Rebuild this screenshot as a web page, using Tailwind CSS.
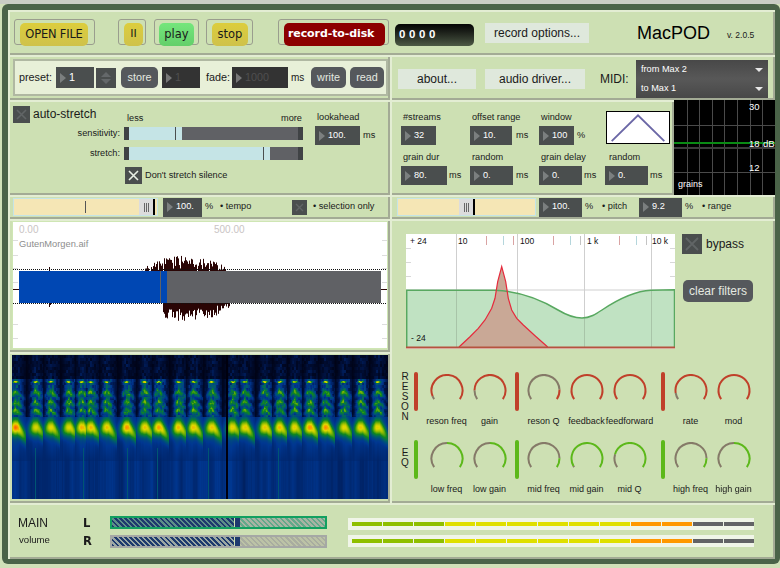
<!DOCTYPE html>
<html>
<head>
<meta charset="utf-8">
<title>MacPOD</title>
<script src="https://cdn.jsdelivr.net/npm/@tailwindcss/browser@4"></script>
</head>
<body class="w-[780px] h-[568px] overflow-hidden bg-[#d0e0b8] font-['Liberation_Sans',sans-serif] text-[9.2px] text-[#1a1a1a]">
<div class="h-[4px] bg-[#c9cdc4]"></div>
<div class="w-[778px] h-[560px] ml-[2px] pl-[6px] pt-[6px] bg-[#4a6348] rounded-[6px]">
<div class="w-[767px] flex flex-col bg-[#cde0b3]">

  <!-- transport -->
  <div class="h-[45px] flex items-start pl-[6px] shadow-[inset_2px_2px_0_#e3edd3,inset_-2px_-2px_0_#a3ab95] font-['DejaVu_Sans',sans-serif]">
    <div class="mt-[9px] w-[81px] h-[26px] pl-[5px] pt-[3px] rounded-[3px] border border-[#9a9d8e] shrink-0">
      <div class="w-[68px] h-[23px] rounded-[5px] bg-gradient-to-b from-[#dccd3c] to-[#cfc24a] flex items-center justify-center text-[11.5px] tracking-[-0.2px]">OPEN FILE</div>
    </div>
    <div class="mt-[9px] ml-[23px] w-[28px] h-[26px] pl-[5px] pt-[3px] rounded-[3px] border border-[#9a9d8e] shrink-0">
      <div class="w-[19px] h-[23px] rounded-[5px] bg-gradient-to-b from-[#dccd3c] to-[#cfc24a] flex items-center justify-center text-[11px]">II</div>
    </div>
    <div class="mt-[9px] ml-[8px] w-[45px] h-[26px] pl-[4px] pt-[3px] rounded-[3px] border border-[#9a9d8e] shrink-0">
      <div class="w-[35px] h-[23px] rounded-[5px] bg-gradient-to-b from-[#74e67c] to-[#63cf6a] flex items-center justify-center text-[11.5px]">play</div>
    </div>
    <div class="mt-[9px] ml-[7px] w-[47px] h-[26px] pl-[5px] pt-[3px] rounded-[3px] border border-[#9a9d8e] shrink-0">
      <div class="w-[36px] h-[23px] rounded-[5px] bg-gradient-to-b from-[#dccd3c] to-[#cfc24a] flex items-center justify-center text-[11.5px]">stop</div>
    </div>
    <div class="mt-[9px] ml-[25px] w-[111px] h-[26px] pl-[5px] pt-[3px] rounded-[3px] border border-[#9a9d8e] shrink-0">
      <div class="w-[101px] h-[23px] rounded-[5px] bg-[#8c0000] text-white font-bold flex items-center pl-[4px] whitespace-nowrap text-[11px] tracking-[-0.1px]">record-to-disk</div>
    </div>
    <div class="mt-[14px] ml-[6px] w-[79px] h-[22px] rounded-[5px] bg-gradient-to-b from-[#050505] to-[#4d5a45] text-white font-['Liberation_Sans',sans-serif] font-bold text-[11.5px] tracking-[3.6px] pl-[4px] flex items-center shrink-0">0000</div>
    <div class="mt-[13px] ml-[11px] w-[104px] h-[20px] bg-[#dfe8dc] flex items-center justify-center font-['Liberation_Sans',sans-serif] text-[12px] shrink-0">record options...</div>
    <div class="mt-[12px] ml-[48px] w-[73px] text-[18px] leading-[22px] text-black font-['Liberation_Sans',sans-serif] whitespace-nowrap shrink-0">MacPOD</div>
    <div class="mt-[20px] ml-[17px] text-[8.5px] leading-[11px] font-['Liberation_Sans',sans-serif] whitespace-nowrap">v. 2.0.5</div>
  </div>

  <!-- presets / midi -->
  <div class="h-[45px] flex">
    <div class="w-[382px] h-full pl-[5px] pt-[4px] shadow-[inset_2px_2px_0_#e3edd3,inset_-2px_-2px_0_#a3ab95]">
      <div class="w-[375px] h-[37px] flex items-center pl-[4px] bg-[#e8f0d8] border-2 border-[#b0b8a2] text-[10.8px]">
        <span class="w-[37px]">preset:</span>
        <div class="w-[38px] h-[21px] bg-[#4a4e4e] flex items-center pl-[4px] gap-[3px] text-white"><i class="w-0 h-0 border-y-[5px] border-y-transparent border-l-[6px] border-l-[#7b7f7f]"></i>1</div>
        <div class="ml-[2px] w-[20px] h-[20px] bg-[#4a4e4e] flex flex-col items-center justify-center gap-[2px]"><i class="w-0 h-0 border-x-[5px] border-x-transparent border-b-[5px] border-b-[#64686a]"></i><i class="w-0 h-0 border-x-[5px] border-x-transparent border-t-[5px] border-t-[#64686a]"></i></div>
        <div class="ml-[5px] w-[37px] h-[21px] rounded-[5px] bg-[#55585c] text-[#e4e8e0] flex items-center justify-center">store</div>
        <div class="ml-[4px] w-[38px] h-[21px] bg-[#333333] flex items-center pl-[4px] gap-[3px] text-[#4f4f4f]"><i class="w-0 h-0 border-y-[5px] border-y-transparent border-l-[6px] border-l-[#777777]"></i>1</div>
        <span class="ml-[6px] w-[26px]">fade:</span>
        <div class="w-[56px] h-[21px] bg-[#333333] flex items-center pl-[4px] gap-[3px] text-[#4f4f4f]"><i class="w-0 h-0 border-y-[5px] border-y-transparent border-l-[6px] border-l-[#777777]"></i>1000</div>
        <span class="ml-[3px] w-[20px] text-[10px]">ms</span>
        <div class="w-[35px] h-[21px] rounded-[5px] bg-[#55585c] text-[#e4e8e0] flex items-center justify-center">write</div>
        <div class="ml-[4px] w-[34px] h-[21px] rounded-[5px] bg-[#55585c] text-[#e4e8e0] flex items-center justify-center">read</div>
      </div>
    </div>
    <div class="w-[385px] h-full flex items-start pl-[8px] shadow-[inset_2px_2px_0_#e3edd3,inset_-2px_-2px_0_#a3ab95]">
      <div class="mt-[14px] w-[78px] h-[20px] bg-[#dfe8dc] flex items-center justify-center text-[12px]">about...</div>
      <div class="mt-[14px] ml-[9px] w-[100px] h-[20px] bg-[#dfe8dc] flex items-center justify-center text-[12px]">audio driver...</div>
      <div class="mt-[16px] ml-[15px] w-[36px] text-[12px] leading-[16px]">MIDI:</div>
      <div class="mt-[5px] w-[132px] h-[38px] text-white text-[9.2px]">
        <div class="h-[19px] flex items-center justify-between px-[5px] bg-gradient-to-b from-[#484848] to-[#585858]">from Max 2<i class="w-0 h-0 border-x-[4px] border-x-transparent border-t-[4px] border-t-[#e8e8e8]"></i></div>
        <div class="h-[19px] flex items-center justify-between px-[5px] bg-gradient-to-b from-[#585858] to-[#484848]">to Max 1<i class="w-0 h-0 border-x-[4px] border-x-transparent border-t-[4px] border-t-[#e8e8e8]"></i></div>
      </div>
    </div>
  </div>

  <!-- auto-stretch / grains -->
  <div class="h-[95px] flex">
    <div class="w-[382px] h-full flex shadow-[inset_2px_2px_0_#e3edd3,inset_-2px_-2px_0_#a3ab95]">
      <div class="w-[307px] pl-[5px] pt-[6px]">
        <div class="h-[21px] flex items-start">
          <div class="w-[17px] h-[17px] bg-[#4a4e4e] flex items-center justify-center"><svg width="13" height="13" viewBox="0 0 13 13"><path d="M2 2L11 11M11 2L2 11" stroke="#616566" stroke-width="1.6"/></svg></div>
          <span class="ml-[3px] text-[12px] leading-[16px] w-[94px] whitespace-nowrap">auto-stretch</span>
          <span class="mt-[6px] w-[154px]">less</span>
          <span class="mt-[6px]">more</span>
        </div>
        <div class="flex items-center h-[13px]">
          <span class="w-[107px] text-right">sensitivity:</span>
          <div class="ml-[4px] w-[179px] h-[13px] flex bg-[#606165] shrink-0">
            <div class="w-[5px] bg-[#404345]"></div>
            <div class="w-[53px] bg-[#c5e4e6] relative"><div class="absolute left-[46px] top-0 w-[1px] h-full bg-[#4a4e4e]"></div></div>
            <div class="flex-1"></div>
            <div class="w-[5px] bg-[#404345]"></div>
          </div>
        </div>
        <div class="flex items-center h-[13px] mt-[7px]">
          <span class="w-[107px] text-right">stretch:</span>
          <div class="ml-[4px] w-[179px] h-[13px] flex bg-[#606165] shrink-0">
            <div class="w-[5px] bg-[#404345]"></div>
            <div class="w-[141px] bg-[#c5e4e6] relative"><div class="absolute left-[134px] top-0 w-[1px] h-full bg-[#4a4e4e]"></div></div>
            <div class="flex-1"></div>
            <div class="w-[5px] bg-[#404345]"></div>
          </div>
        </div>
        <div class="flex items-center mt-[7px] ml-[112px]">
          <div class="w-[17px] h-[17px] bg-[#4a4e4e] flex items-center justify-center"><svg width="13" height="13" viewBox="0 0 13 13"><path d="M2 2L11 11M11 2L2 11" stroke="#e8eee4" stroke-width="1.6"/></svg></div>
          <span class="ml-[3px] whitespace-nowrap">Don't stretch silence</span>
        </div>
      </div>
      <div class="pt-[11px]">
        <div class="h-[15px] ml-[2px]">lookahead</div>
        <div class="flex items-center">
          <div class="w-[45px] h-[19px] bg-[#4a4e4e] flex items-center pl-[4px] gap-[3px] text-white"><i class="w-0 h-0 border-y-[5px] border-y-transparent border-l-[6px] border-l-[#7b7f7f]"></i>100.</div>
          <span class="ml-[3px]">ms</span>
        </div>
      </div>
    </div>
    <div class="w-[284px] h-full pl-[11px] pt-[11px] grid grid-cols-[69px_69px_66px_1fr] gap-y-[6px] content-start shadow-[inset_2px_2px_0_#e3edd3,inset_-2px_-2px_0_#a3ab95]">
      <div>
        <div class="h-[15px] ml-[2px]">#streams</div>
        <div class="w-[35px] h-[19px] bg-[#4a4e4e] flex items-center pl-[4px] gap-[3px] text-white"><i class="w-0 h-0 border-y-[5px] border-y-transparent border-l-[6px] border-l-[#7b7f7f]"></i>32</div>
      </div>
      <div>
        <div class="h-[15px] ml-[2px]">offset range</div>
        <div class="flex items-center"><div class="w-[42px] h-[19px] bg-[#4a4e4e] flex items-center pl-[4px] gap-[3px] text-white"><i class="w-0 h-0 border-y-[5px] border-y-transparent border-l-[6px] border-l-[#7b7f7f]"></i>10.</div><span class="ml-[4px]">ms</span></div>
      </div>
      <div>
        <div class="h-[15px] ml-[2px]">window</div>
        <div class="flex items-center"><div class="w-[35px] h-[19px] bg-[#4a4e4e] flex items-center pl-[4px] gap-[3px] text-white"><i class="w-0 h-0 border-y-[5px] border-y-transparent border-l-[6px] border-l-[#7b7f7f]"></i>100</div><span class="ml-[3px]">%</span></div>
      </div>
      <div class="ml-[1px]">
        <svg width="64" height="33" viewBox="0 0 64 33" class="bg-white border border-black block"><path d="M4 31L32 3.5L60 31" fill="none" stroke="#6b67a6" stroke-width="2"/></svg>
      </div>
      <div>
        <div class="h-[15px] ml-[2px]">grain dur</div>
        <div class="flex items-center"><div class="w-[46px] h-[19px] bg-[#4a4e4e] flex items-center pl-[4px] gap-[3px] text-white"><i class="w-0 h-0 border-y-[5px] border-y-transparent border-l-[6px] border-l-[#7b7f7f]"></i>80.</div><span class="ml-[2px]">ms</span></div>
      </div>
      <div>
        <div class="h-[15px] ml-[2px]">random</div>
        <div class="flex items-center"><div class="w-[43px] h-[19px] bg-[#4a4e4e] flex items-center pl-[4px] gap-[3px] text-white"><i class="w-0 h-0 border-y-[5px] border-y-transparent border-l-[6px] border-l-[#7b7f7f]"></i>0.</div><span class="ml-[3px]">ms</span></div>
      </div>
      <div>
        <div class="h-[15px] ml-[2px]">grain delay</div>
        <div class="flex items-center"><div class="w-[43px] h-[19px] bg-[#4a4e4e] flex items-center pl-[4px] gap-[3px] text-white"><i class="w-0 h-0 border-y-[5px] border-y-transparent border-l-[6px] border-l-[#7b7f7f]"></i>0.</div><span class="ml-[2px]">ms</span></div>
      </div>
      <div>
        <div class="h-[15px] ml-[4px]">random</div>
        <div class="flex items-center"><div class="w-[43px] h-[19px] bg-[#4a4e4e] flex items-center pl-[4px] gap-[3px] text-white"><i class="w-0 h-0 border-y-[5px] border-y-transparent border-l-[6px] border-l-[#7b7f7f]"></i>0.</div><span class="ml-[2px]">ms</span></div>
      </div>
    </div>
    <svg width="101" height="95" viewBox="0 0 101 95" class="bg-black block shrink-0">
      <g stroke="#4a4a4a" stroke-width="1">
        <path d="M13.5 0V95M25.5 0V95M38.5 0V95M50.5 0V95M63.5 0V95M76.5 0V95M88.5 0V95"/>
        <path d="M0 25.5H101M0 72.5H101"/>
      </g>
      <path d="M0 48H101" stroke="#3c3c3c" stroke-width="2"/>
      <path d="M0 43H101" stroke="#0a8a14" stroke-width="2"/>
      <g fill="#ffffff" font-size="9.5" font-family="Liberation Sans">
        <text x="75" y="10">30</text>
        <text x="75" y="47">18</text>
        <text x="89" y="47">dB</text>
        <text x="75" y="71">12</text>
        <text x="4" y="87" font-size="9">grains</text>
      </g>
    </svg>
  </div>

  <!-- tempo / pitch -->
  <div class="h-[24px] flex">
    <div class="w-[382px] h-full flex items-center pl-[5px] shadow-[inset_2px_2px_0_#e3edd3,inset_-2px_-2px_0_#a3ab95]">
      <div class="w-[145px] h-[18px] bg-[#f5e6b5] border border-[#c5e4e6] relative shrink-0">
        <div class="absolute left-[71px] top-[2px] w-[1px] h-[12px] bg-[#555555]"></div>
        <div class="absolute left-[125px] top-0 w-[16px] h-[16px] bg-[#dcdcdc] border-r-2 border-black flex items-center justify-center gap-[1px]"><i class="w-[1px] h-[9px] bg-[#666666]"></i><i class="w-[1px] h-[9px] bg-[#666666]"></i><i class="w-[1px] h-[9px] bg-[#666666]"></i></div>
      </div>
      <div class="ml-[5px] w-[39px] h-[19px] bg-[#4a4e4e] flex items-center pl-[4px] gap-[3px] text-white shrink-0"><i class="w-0 h-0 border-y-[5px] border-y-transparent border-l-[6px] border-l-[#7b7f7f]"></i>100.</div>
      <span class="ml-[3px] w-[15px]">%</span>
      <span class="whitespace-nowrap w-[72px]">• tempo</span>
      <div class="w-[15px] h-[15px] bg-[#4a4e4e] flex items-center justify-center shrink-0"><svg width="11" height="11" viewBox="0 0 11 11"><path d="M2 2L9 9M9 2L2 9" stroke="#616566" stroke-width="1.4"/></svg></div>
      <span class="ml-[6px] whitespace-nowrap">• selection only</span>
    </div>
    <div class="w-[385px] h-full flex items-center pl-[7px] shadow-[inset_2px_2px_0_#e3edd3,inset_-2px_-2px_0_#a3ab95]">
      <div class="w-[139px] h-[18px] bg-[#f5e6b5] border border-[#c5e4e6] relative shrink-0">
        <div class="absolute left-[61px] top-0 w-[16px] h-[16px] bg-[#dcdcdc] border-r-2 border-black flex items-center justify-center gap-[1px]"><i class="w-[1px] h-[9px] bg-[#666666]"></i><i class="w-[1px] h-[9px] bg-[#666666]"></i><i class="w-[1px] h-[9px] bg-[#666666]"></i></div>
      </div>
      <div class="ml-[3px] w-[43px] h-[19px] bg-[#4a4e4e] flex items-center pl-[4px] gap-[3px] text-white shrink-0"><i class="w-0 h-0 border-y-[5px] border-y-transparent border-l-[6px] border-l-[#7b7f7f]"></i>100.</div>
      <span class="ml-[3px] w-[17px]">%</span>
      <span class="whitespace-nowrap w-[37px]">• pitch</span>
      <div class="w-[43px] h-[19px] bg-[#4a4e4e] flex items-center pl-[4px] gap-[3px] text-white shrink-0"><i class="w-0 h-0 border-y-[5px] border-y-transparent border-l-[6px] border-l-[#7b7f7f]"></i>9.2</div>
      <span class="ml-[3px] w-[17px]">%</span>
      <span class="whitespace-nowrap">• range</span>
    </div>
  </div>

  <!-- waveform, sonogram, filters -->
  <div class="h-[284px] flex">
    <div class="w-[382px] flex flex-col">
      <div class="h-[133px] pl-[5px] pt-[3px] shadow-[inset_2px_2px_0_#e3edd3,inset_-2px_-2px_0_#a3ab95]">
        <svg id="wave" width="374" height="126" viewBox="0 0 374 126" class="bg-white block outline outline-[#cfe6b4]">
          <g id="wavebars" stroke="#2a0505" stroke-width="1"></g>
          <g stroke="#dddddd" stroke-width="1" id="wavetick"></g>
          <path d="M0 67.5H6M368 67.5H374" stroke="#2a0505"/>
          <path d="M0 47.5H374M0 81.5H374" stroke="#111111" stroke-width="1" stroke-dasharray="1 1"/>
          <rect x="6" y="49" width="148" height="32" fill="#0047b3"/>
          <rect x="154" y="49" width="214" height="32" fill="#606165"/>
          <rect x="147" y="49" width="1" height="32" fill="#606165"/>
          <g font-size="10" font-family="Liberation Sans">
            <text x="6" y="11" fill="#c9c4c4">0.00</text>
            <text x="201" y="11" fill="#c9c4c4">500.00</text>
            <text x="6" y="25" fill="#8d8d8d" font-size="9.3">GutenMorgen.aif</text>
          </g>
        </svg>
      </div>
      <div class="h-[151px] pl-[4px] pt-[3px] shadow-[inset_2px_2px_0_#e3edd3,inset_-2px_-2px_0_#a3ab95]">
        <canvas id="sono" width="376" height="144" class="block"></canvas>
      </div>
    </div>
    <div class="w-[385px] flex flex-col pt-[15px] shadow-[inset_2px_2px_0_#e3edd3,inset_-2px_-2px_0_#a3ab95]">
      <div class="flex pl-[16px] items-start">
        <svg width="269" height="115" viewBox="406 234 269 115" class="bg-white block shrink-0">
          <path d="M406 290H675M456.5 234V348M517.5 234V348M584.5 234V348M651.5 234V348" stroke="#cfcfcf" fill="none"/>
          <path d="M406 248.5H411M406 262.5H411M406 276.5H411M406 318.5H411M406 332.5H411M670 248.5H675M670 262.5H675M670 276.5H675M670 318.5H675M670 332.5H675" stroke="#d8d8d8"/>
          <path d="M406 290.3H495C515 291 535 296 558 310C568 316 575 318 582 318C590 318 596 314 602 310C620 298 635 291 651 290.3L675 289.7V347H406Z" fill="#c0e2c2" stroke="none"/>
          <path d="M456.5 290V347M517.5 292V347M584.5 318V347M651.5 290V347" stroke="#a8c4a8"/>
          <path d="M459 347L470 336.7L478.3 328.3L485 320L491.7 308.3L495 298.3L497.7 281.7L501.7 266.7L505.7 281.7L508.3 298.3L511.7 310L516.7 318.3L523.3 325L535 335.7L547.7 347Z" fill="#c9a896" stroke="none"/>
          <path d="M406.7 347V290.3H495C515 291 535 296 558 310C568 316 575 318 582 318C590 318 596 314 602 310C620 298 635 291 651 290.3L674.5 289.7V347" fill="none" stroke="#58a860" stroke-width="1.5"/>
          <path d="M459 347L470 336.7L478.3 328.3L485 320L491.7 308.3L495 298.3L497.7 281.7L501.7 266.7L505.7 281.7L508.3 298.3L511.7 310L516.7 318.3L523.3 325L535 335.7L547.7 347" fill="none" stroke="#e52a3c" stroke-width="1.2"/>
          <path d="M406 347.5H675" stroke="#b5533f" stroke-width="2"/>
          <path d="M486.5 236V245M513.5 236V245M553.5 236V245M619.5 236V245" stroke="#d9a3a3"/>
          <path d="M503.5 236V245M570.5 236V245M636.5 236V245" stroke="#b5d6dc"/>
          <path d="M580.5 236V245M646.5 236V245" stroke="#c4c4c4"/>
          <g fill="#111111" font-size="8.5" font-family="Liberation Sans">
            <text x="410" y="244">+ 24</text>
            <text x="458" y="244">10</text>
            <text x="520" y="244">100</text>
            <text x="587" y="244">1 k</text>
            <text x="652" y="244">10 k</text>
            <text x="411" y="341">- 24</text>
          </g>
        </svg>
        <div class="ml-[7px]">
          <div class="flex items-center">
            <div class="w-[20px] h-[20px] bg-[#4a4e4e] flex items-center justify-center"><svg width="16" height="16" viewBox="0 0 16 16"><path d="M2 2L14 14M14 2L2 14" stroke="#616566" stroke-width="1.8"/></svg></div>
            <span class="ml-[4px] text-[12px]">bypass</span>
          </div>
          <div class="mt-[26px] ml-[1px] w-[70px] h-[22px] rounded-[5px] bg-[#55585c] text-[#e4e8e0] text-[12px] whitespace-nowrap flex items-center justify-center">clear filters</div>
        </div>
      </div>
      <div id="knobs" class="mt-[23px] pl-[10px]"></div>
    </div>
  </div>

  <!-- main volume -->
  <div class="h-[56px] flex pl-[10px] pt-[13px] shadow-[inset_2px_2px_0_#e3edd3,inset_-2px_-2px_0_#a3ab95]">
    <div class="w-[65px]">
      <div class="h-[17px] text-[12px] leading-[14px]">MAIN</div>
      <div class="ml-[1px] text-[9.6px]">volume</div>
    </div>
    <div class="w-[27px] font-bold text-[11.5px] font-['DejaVu_Sans',sans-serif]">
      <div class="h-[18px] leading-[14px]">L</div>
      <div class="leading-[14px]">R</div>
    </div>
    <div class="w-[238px]">
      <div class="w-[217px] h-[13px] border-2 border-[#12a060] flex">
        <div class="w-[122px] h-full bg-[repeating-linear-gradient(45deg,#1e3a6e_0,#1e3a6e_2px,#5d8f88_2px,#5d8f88_3.6px)]"></div>
        <div class="ml-[1px] w-[5px] h-full bg-[#1e3a6e]"></div>
        <div class="flex-1 h-full bg-[repeating-linear-gradient(45deg,#a9b3a3_0,#a9b3a3_2px,#62a98a_2px,#62a98a_3.6px)]"></div>
      </div>
      <div class="mt-[6px] w-[217px] h-[13px] border-2 border-[#a5a8a5] flex">
        <div class="w-[122px] h-full bg-[repeating-linear-gradient(45deg,#1e3a6e_0,#1e3a6e_2px,#9ba8a4_2px,#9ba8a4_3.6px)]"></div>
        <div class="ml-[1px] w-[5px] h-full bg-[#1e3a6e]"></div>
        <div class="flex-1 h-full bg-[repeating-linear-gradient(45deg,#bcc3a6_0,#bcc3a6_2px,#a9ada0_2px,#a9ada0_3.6px)]"></div>
      </div>
    </div>
    <div class="pt-[2px]">
      <div id="meterL" class="w-[406px] h-[12px] bg-[#f0f5e8] pl-[4px] flex items-center gap-[1px]"></div>
      <div id="meterR" class="mt-[5px] w-[406px] h-[12px] bg-[#f0f5e8] pl-[4px] flex items-center gap-[1px]"></div>
    </div>
  </div>

</div>
</div>
<script>
// tiny seeded random so the picture is stable between runs
let seed = 12345;
function rnd() { seed = (seed * 1664525 + 1013904223) >>> 0; return seed / 4294967296; }

// waveform bars
function drawWave() {
  let out = '';
  for (let x = 127; x < 219; x += 1) {
    const t = (x - 127) / 92;
    const env = Math.pow(Math.sin(Math.PI * Math.min(1, t * 0.97 + 0.03)), 0.25);
    const top = env * (rnd() * 10 + 24) * (rnd() < 0.25 ? 0.75 : 1);
    const bot = env * (rnd() * 12 + 20) * (t < 0.25 ? 0.5 : 1);
    out += `<path d="M${x + 0.5} ${67 - top}V${67 + bot}"/>`;
  }
  out += '<path d="M36.5 45V85M37.5 50V83"/>';
  document.getElementById('wavebars').innerHTML = out;
  document.getElementById('wavetick').innerHTML = [18, 33, 46, 60, 102, 116, 130].map(y =>
    `<path d="M0 ${y}.5H5M369 ${y}.5H374"/>`).join('');
}
drawWave();

// sonogram, a made-up speech-like picture
const stops = [[0,0,0,14],[.18,0,20,70],[.33,0,55,145],[.45,0,95,105],[.58,15,135,30],[.75,150,190,0],[.85,225,215,0],[.93,255,150,0],[1,250,70,10]];
function colour(v) {
  v = Math.max(0, Math.min(1, v));
  for (let i = 1; i < stops.length; i++) {
    if (v <= stops[i][0]) {
      const a = stops[i - 1], b = stops[i], t = (v - a[0]) / (b[0] - a[0]);
      return [a[1] + (b[1] - a[1]) * t, a[2] + (b[2] - a[2]) * t, a[3] + (b[3] - a[3]) * t];
    }
  }
  return stops[stops.length - 1].slice(1);
}
function drawSono() {
  const c = document.getElementById('sono'), g = c.getContext('2d');
  const W = c.width, H = c.height, img = g.createImageData(W, H);
  const bursts = [3, 23, 38, 56, 69, 78, 94, 114, 132, 146, 166, 181, 199, 220, 232, 252, 267, 282, 297, 313, 331, 348, 365];
  const streaks = [23, 71, 115, 145, 196, 266];
  const amp = bursts.map(() => 0.85 + rnd() * 0.2);
  // coarse noise cells, the reference is made of small blocks
  const cells = [];
  for (let i = 0; i < 200 * 60; i++) cells.push(rnd());
  // column brightness, low-passed so the lower part reads as soft stripes
  const raw = [];
  for (let x = 0; x < W; x++) raw.push(rnd());
  const col = raw.map((_, x) => {
    let s = 0;
    for (let k = -2; k <= 2; k++) s += raw[Math.max(0, Math.min(W - 1, x + k))];
    return s / 5;
  });
  for (let y = 0; y < H; y++) {
    for (let x = 0; x < W; x++) {
      let bi = 0, dx = 99;
      bursts.forEach((b, i) => {
        const d = x - b;
        if (Math.abs(d) < Math.abs(dx)) { dx = d; bi = i; }
      });
      const env = Math.exp(-dx * dx / (dx < 0 ? 30 : 80));
      const n = cells[Math.floor(x / 2) + 200 * Math.floor(y / 3)];
      let v;
      if (y < 24) {
        v = 0.02 + env * (0.05 + n * 0.15);
      } else if (y < 62) {
        v = 0.04 + env * (0.24 + n * 0.22);
        for (const yc of [36, 46, 54]) {
          const cy = yc + Math.abs(dx) * 0.8;
          v += env * 0.24 * Math.exp(-(y - cy) * (y - cy) / 8);
        }
        if (y >= 26 && y <= 27) v += env * Math.exp(-dx * dx / 8) * 0.4;
      } else if (y < 106) {
        const cy = 72 + Math.pow(Math.max(0, dx - 2), 1.15) * 0.9 + Math.max(0, -dx - 2) * 0.4;
        const band = Math.exp(-(y - cy) * (y - cy) / 60);
        const hor = Math.exp(-dx * dx / (dx < 0 ? 45 : 130));
        const fall = Math.max(0, Math.min(1, (106 - y) / 30));
        v = 0.27 + (col[x] - 0.5) * 0.08 + fall * 0.1 * env + band * hor * 0.56 * amp[bi];
      } else {
        v = 0.29 + (col[x] - 0.5) * 0.14;
      }
      if (y > 92 && streaks.includes(x)) v = Math.max(v, 0.42);
      if (x >= 214 && x <= 215) v = 0;
      const rgb = colour(v), i = (y * W + x) * 4;
      img.data[i] = rgb[0]; img.data[i + 1] = rgb[1]; img.data[i + 2] = rgb[2]; img.data[i + 3] = 255;
    }
  }
  g.putImageData(img, 0, 0);
}
drawSono();

// knobs
const RED = '#c0402a', GREEN = '#5cb81a', GREY = '#857a68';
function arc(from, to) {
  const pt = f => {
    const a = (236 + f * 248) * Math.PI / 180;
    return [18 + 15.5 * Math.sin(a), 16.5 - 15.5 * Math.cos(a)];
  };
  const [x1, y1] = pt(from), [x2, y2] = pt(to);
  const large = (to - from) * 248 > 180 ? 1 : 0;
  return `M${x1.toFixed(2)} ${y1.toFixed(2)}A15.5 15.5 0 ${large} 1 ${x2.toFixed(2)} ${y2.toFixed(2)}`;
}
function knob(k, colr) {
  return `<div class="w-[43px] pt-[2px] flex flex-col items-center shrink-0">
    <svg width="36" height="30" viewBox="0 0 36 30" class="block">
      ${k[1] > 0 ? `<path d="${arc(0, k[1])}" fill="none" stroke="${GREY}" stroke-width="2"/>` : ''}
      <path d="${arc(k[1], 1)}" fill="none" stroke="${colr}" stroke-width="2"/>
    </svg>
    <div class="mt-[11px] h-[12px] leading-[12px] text-[9px] whitespace-nowrap">${k[0]}</div>
  </div>`;
}
const gaps = [['ml-[4px]', 'ml-[7px]'], ['ml-[3.5px]', 'ml-[3.5px]'], ['ml-[9.5px]', 'ml-[4.5px]']];
function knobRow(letters, colr, pill, groups, extra, pad) {
  const g = groups.map((list, i) =>
    `<div class="${gaps[i][0]} w-[4px] h-[39px] rounded-full shrink-0 ${pill}"></div><div class="${gaps[i][1]} flex">${list.map(k => knob(k, colr)).join('')}</div>`
  ).join('');
  return `<div class="flex items-start ${extra}">
    <div class="w-[10px] text-center text-[10px] leading-[10px] ${pad}">${letters.map(l => `<div>${l}</div>`).join('')}</div>${g}
  </div>`;
}
document.getElementById('knobs').innerHTML =
  knobRow(['R', 'E', 'S', 'O', 'N'], RED, 'bg-[#c0402a]', [
    [['reson freq', .05], ['gain', .14]],
    [['reson Q', .85], ['feedback', 0], ['feedforward', 0]],
    [['rate', .1], ['mod', 0]]
  ], '', '') +
  knobRow(['E', 'Q'], GREEN, 'bg-[#5cb81a]', [
    [['low freq', .5], ['low gain', .5]],
    [['mid freq', .86], ['mid gain', .02], ['mid Q', .2]],
    [['high freq', .86], ['high gain', .5]]
  ], 'mt-[13px]', 'pt-[8px]');

// level meters
const segs = ['bg-[#8fbf00]', 'bg-[#8fbf00]', 'bg-[#8fbf00]', 'bg-[#dfdf00]', 'bg-[#dfdf00]', 'bg-[#dfdf00]', 'bg-[#dfdf00]', 'bg-[#dfdf00]', 'bg-[#dfdf00]', 'bg-[#ff9800]', 'bg-[#ff9800]', 'bg-[#626366]', 'bg-[#626366]'];
const meter = segs.map(s => `<div class="w-[30px] h-[4px] ${s}"></div>`).join('');
document.getElementById('meterL').innerHTML = meter;
document.getElementById('meterR').innerHTML = meter;
</script>
</body>
</html>
